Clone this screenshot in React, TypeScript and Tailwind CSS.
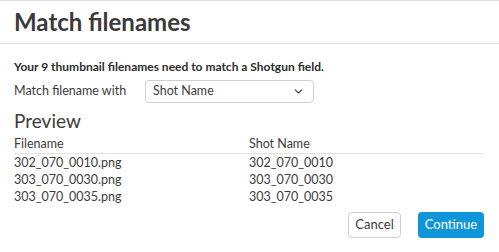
import { ChevronDown } from "lucide-react";

const ROWS = [
  { file: "302_070_0010.png", shot: "302_070_0010" },
  { file: "303_070_0030.png", shot: "303_070_0030" },
  { file: "303_070_0035.png", shot: "303_070_0035" },
];

export default function App() {
  return (
    <div
      className="w-[499px] h-[252px] bg-white border-t border-[#e0e0e0] text-[#3c3c3c] overflow-hidden"
      style={{ fontFamily: 'Lato, "Noto Sans", sans-serif' }}
    >
      {/* Header */}
      <div className="h-[43px] border-b border-[#e2e2e2] px-[14px] flex items-center">
        <h1 className="text-[24px] font-bold text-[#3a3a3a] leading-none">Match filenames</h1>
      </div>

      <div className="px-[14px]">
        <p className="mt-[15px] text-[12px] font-bold leading-[16px] text-[#2d2d2d]">
          Your 9 thumbnail filenames need to match a Shotgun field.
        </p>

        <div className="mt-[5px] flex items-center text-[12.5px]">
          <span className="w-[131px]">Match filename with</span>
          <div className="w-[169px] h-[23px] border border-[#cfcfcf] rounded-[4px] flex items-center justify-between pl-[7px] pr-[8px]">
            <span>Shot Name</span>
            <ChevronDown className="size-[13px] text-[#3c3c3c]" strokeWidth={2.2} />
          </div>
        </div>

        <h2 className="mt-[6px] text-[19px] leading-[24px] text-[#3c3c3c]">Preview</h2>

        <div className="mt-[2px] mr-[1px] text-[12.5px]">
          <div className="grid grid-cols-[235px_1fr] border-b border-[#e2e2e2] leading-[17px] pb-[1px]">
            <span>Filename</span>
            <span>Shot Name</span>
          </div>
          {ROWS.map((r) => (
            <div key={r.file} className="grid grid-cols-[235px_1fr] leading-[17px]">
              <span>{r.file}</span>
              <span>{r.shot}</span>
            </div>
          ))}
        </div>

        <div className="mt-[7px] flex justify-end gap-[17px] pr-[1px]">
          <button className="w-[53px] h-[26px] border border-[#cfcfcf] rounded-[4px] text-[13px] text-[#3c3c3c] bg-white">
            Cancel
          </button>
          <button className="w-[66px] h-[26px] rounded-[4px] text-[13px] text-white bg-[#0f96d8]">
            Continue
          </button>
        </div>
      </div>
    </div>
  );
}
